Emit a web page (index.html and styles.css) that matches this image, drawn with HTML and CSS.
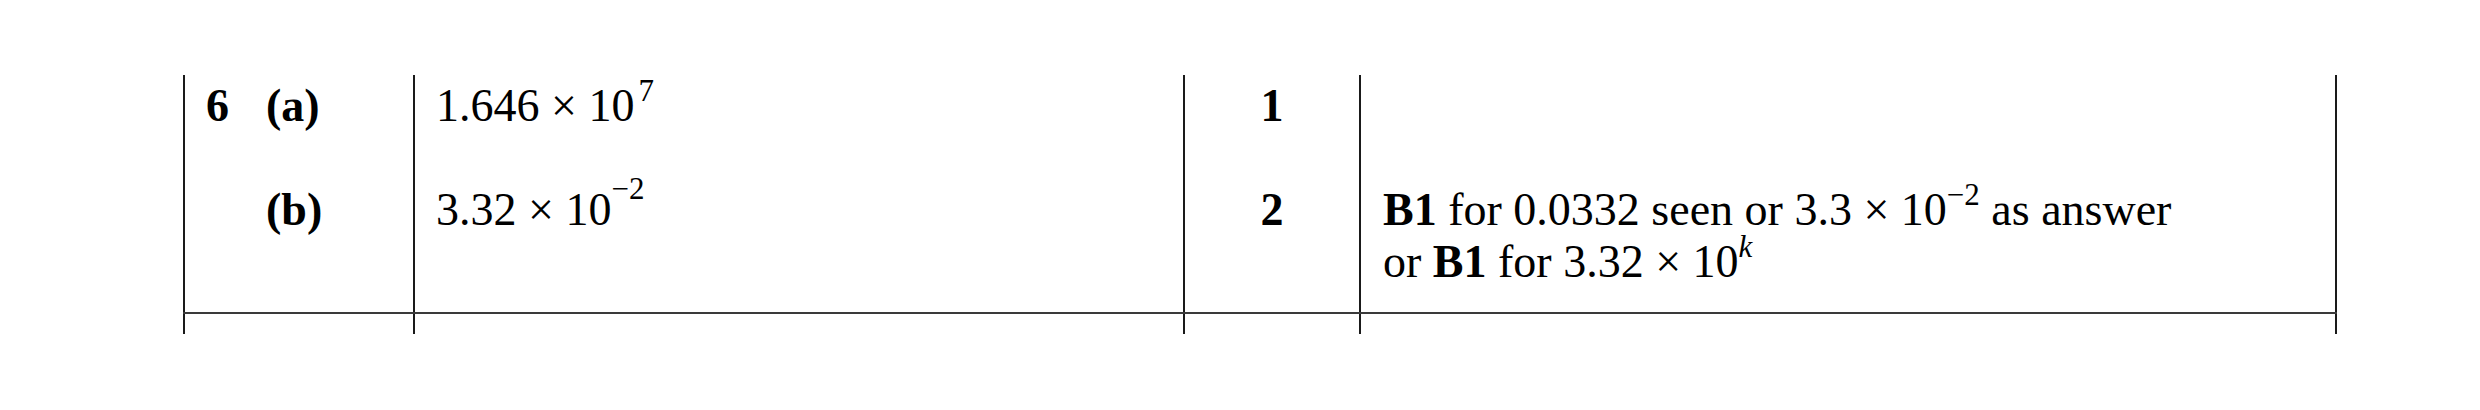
FILE: index.html
```html
<!DOCTYPE html>
<html lang="en">
<head>
<meta charset="utf-8">
<title>Mark scheme</title>
<link rel="stylesheet" href="styles.css">
</head>
<body>
<div class="sheet">
  <div class="row main">
    <div class="cell qn">
      <div class="entry"><span class="num">6</span><span>(a)</span></div>
      <div class="entry"><span class="num"></span><span>(b)</span></div>
    </div>
    <div class="cell ans">
      <div class="entry">1.646 × 10<sup class="exp gap">7</sup></div>
      <div class="entry">3.32 × 10<sup class="exp high">−2</sup></div>
    </div>
    <div class="cell marks">
      <div class="entry">1</div>
      <div class="entry">2</div>
    </div>
    <div class="cell notes">
      <div class="entry"></div>
      <div class="entry"><b>B1</b> for 0.0332 seen or 3.3 × 10<sup class="exp">−2</sup> as answer<br>or <b>B1</b> for 3.32 × 10<sup class="exp"><i>k</i></sup></div>
    </div>
  </div>
  <div class="row stub">
    <div class="cell"></div>
    <div class="cell"></div>
    <div class="cell"></div>
    <div class="cell"></div>
  </div>
</div>
</body>
</html>
```

FILE: styles.css
```css
html, body {
  margin: 0;
  background: #ffffff;
}

body {
  font-family: "Liberation Serif", "Times New Roman", serif;
  font-size: 46px;
  color: #000000;
}

.sheet {
  padding: 75px 0 0 183px;
}

.row {
  display: grid;
  grid-template-columns: 230px 770px 176px 978px;
  width: 2154px;
}

.cell {
  box-sizing: border-box;
  border-left: 2px solid #1a1a1a;
}

.cell:last-child {
  border-right: 2px solid #1a1a1a;
}

.main {
  border-bottom: 2px solid #3a3a3a;
}

.main .cell {
  display: flex;
  flex-direction: column;
  gap: 52px;
  padding: 4.5px 21px 24px 21px;
}

.notes.cell {
  padding-left: 22px;
}

.entry {
  line-height: 52px;
  min-height: 52px;
}

.qn .entry {
  display: flex;
  font-weight: bold;
}

.num {
  width: 60px;
  flex: none;
}

.marks .entry {
  text-align: center;
  font-weight: bold;
}

.exp {
  font-size: 31px;
  line-height: 0;
  vertical-align: 20px;
}

.exp.high {
  vertical-align: 26px;
}

.exp.gap {
  margin-left: 4px;
}

.stub {
  height: 20px;
}
```
